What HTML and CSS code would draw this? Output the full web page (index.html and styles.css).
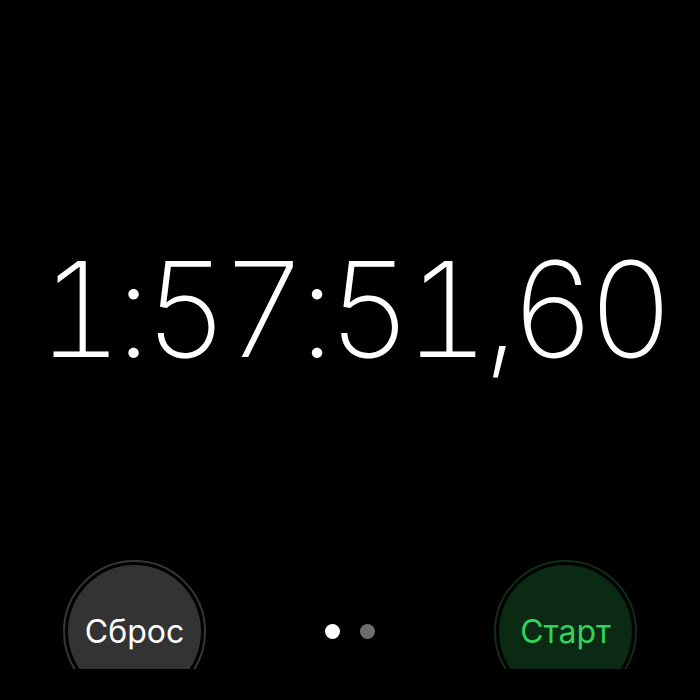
FILE: index.html
```html
<!DOCTYPE html>
<html lang="ru">
<head>
<meta charset="utf-8">
<link rel="stylesheet" href="styles.css">
</head>
<body>
<div class="screen">
  <div class="display">
    <div class="time">1:57:51,60</div>
  </div>
  <div class="controls">
    <div class="btn btn-gray"><div class="btn-inner">Сброс</div></div>
    <div class="pager">
      <span class="dot dot-active"></span>
      <span class="dot"></span>
    </div>
    <div class="btn btn-green"><div class="btn-inner">Старт</div></div>
  </div>
</div>
</body>
</html>
```
FILE: styles.css
```css
html, body {
  margin: 0;
  padding: 0;
  background: #000;
}
body {
  width: 700px;
  height: 700px;
  overflow: hidden;
  font-family: Inter, "Noto Sans", sans-serif;
}
.screen {
  height: 669px;
  overflow: hidden;
  display: flex;
  flex-direction: column;
}
.display {
  padding-top: 243px;
  display: flex;
  justify-content: center;
}
.time {
  color: #fff;
  font-size: 132px;
  font-weight: 200;
  line-height: 132px;
  height: 132px;
  letter-spacing: -7.5px;
  margin-left: 4px;
  font-variant-numeric: tabular-nums;
  white-space: nowrap;
}
.controls {
  margin-top: 185px;
  padding: 0 63px;
  display: flex;
  align-items: center;
  justify-content: space-between;
}
.btn {
  width: 143px;
  height: 143px;
  box-sizing: border-box;
  border-radius: 50%;
  border: 2px solid;
  padding: 3px;
  flex: none;
}
.btn-inner {
  width: 100%;
  height: 100%;
  border-radius: 50%;
  display: flex;
  align-items: center;
  justify-content: center;
  font-size: 32px;
  font-weight: 400;
}
.btn-gray { border-color: #363636; }
.btn-gray .btn-inner { background: #333; color: #fff; }
.btn-green { border-color: #0e2f16; }
.btn-green .btn-inner { background: #0b2a13; color: #32d35c; }
.pager {
  display: flex;
  gap: 20px;
}
.dot {
  width: 15px;
  height: 15px;
  border-radius: 50%;
  background: #6e6e6e;
}
.dot-active { background: #fff; }
```
